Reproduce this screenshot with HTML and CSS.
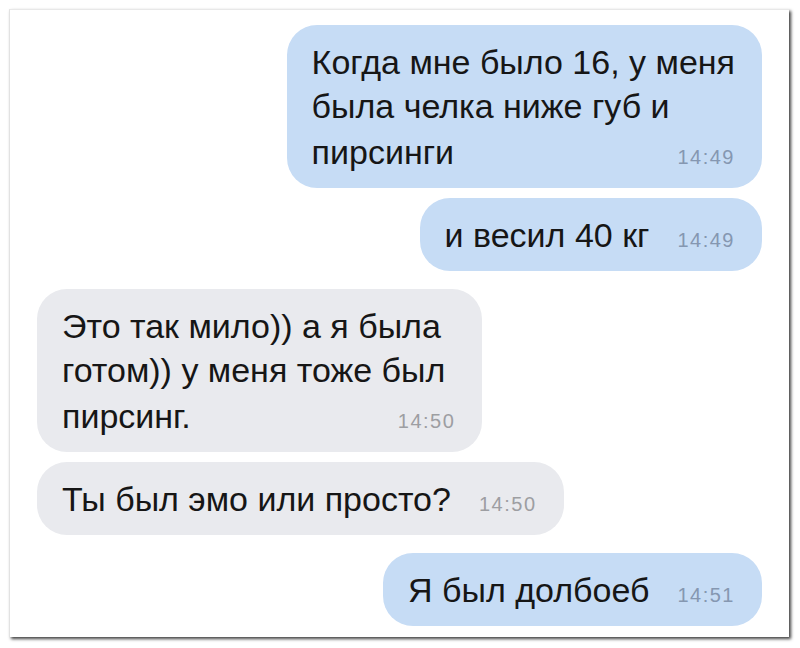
FILE: index.html
```html
<!DOCTYPE html>
<html lang="ru">
<head>
    <meta charset="UTF-8">
    <meta name="viewport" content="width=device-width, initial-scale=1.0">
    <title>Переписка</title>
    <link rel="stylesheet" href="styles.css">
</head>
<body>

<div class="frame">
    <div class="chat">
        <div class="msg out">
            <p class="lines">Когда мне было 16, у меня<br>была челка ниже губ и</p>
            <div class="last"><span>пирсинги</span><span class="time">14:49</span></div>
        </div>
        <div class="msg out">
            <div class="last"><span>и весил 40 кг</span><span class="time">14:49</span></div>
        </div>
        <div class="msg in gap">
            <p class="lines">Это так мило)) а я была<br>готом)) у меня тоже был</p>
            <div class="last"><span>пирсинг.</span><span class="time">14:50</span></div>
        </div>
        <div class="msg in">
            <div class="last"><span>Ты был эмо или просто?</span><span class="time">14:50</span></div>
        </div>
        <div class="msg out gap">
            <div class="last"><span>Я был долбоеб</span><span class="time">14:51</span></div>
        </div>
    </div>
</div>

</body>
</html>
```

FILE: styles.css
```css
* {
    margin: 0;
    padding: 0;
    box-sizing: border-box;
}

body {
    font-family: 'Liberation Sans', Arial, sans-serif;
    background: #fff;
    padding: 9px 11px 11px 9px;
    color: #161616;
}

.frame {
    height: 628px;
    background: #fff;
    border-left: 1px solid #e2e2e2;
    border-top: 1px solid #e8e8e8;
    box-shadow: 2px 2px 3px rgba(0, 0, 0, 0.75);
    padding: 15px 27px 0 27px;
}

.chat {
    display: flex;
    flex-direction: column;
    gap: 10px;
}

.msg {
    border-radius: 30px;
    padding: 15px 27px 14px 25px;
    font-size: 34px;
    line-height: 44px;
}

.msg.gap {
    margin-top: 8px;
}

.out {
    align-self: flex-end;
    background: #c6dcf5;
}

.in {
    align-self: flex-start;
    background: #e9eaee;
}

.lines {
    padding-bottom: 2px;
}

.in .lines {
    padding-right: 10px;
}

.last {
    display: flex;
    justify-content: space-between;
    align-items: baseline;
    gap: 28px;
}

.time {
    font-size: 20px;
    line-height: 1;
    letter-spacing: 1.5px;
}

.out .time {
    color: #8597b1;
}

.in .time {
    color: #9d9ea2;
}
```
